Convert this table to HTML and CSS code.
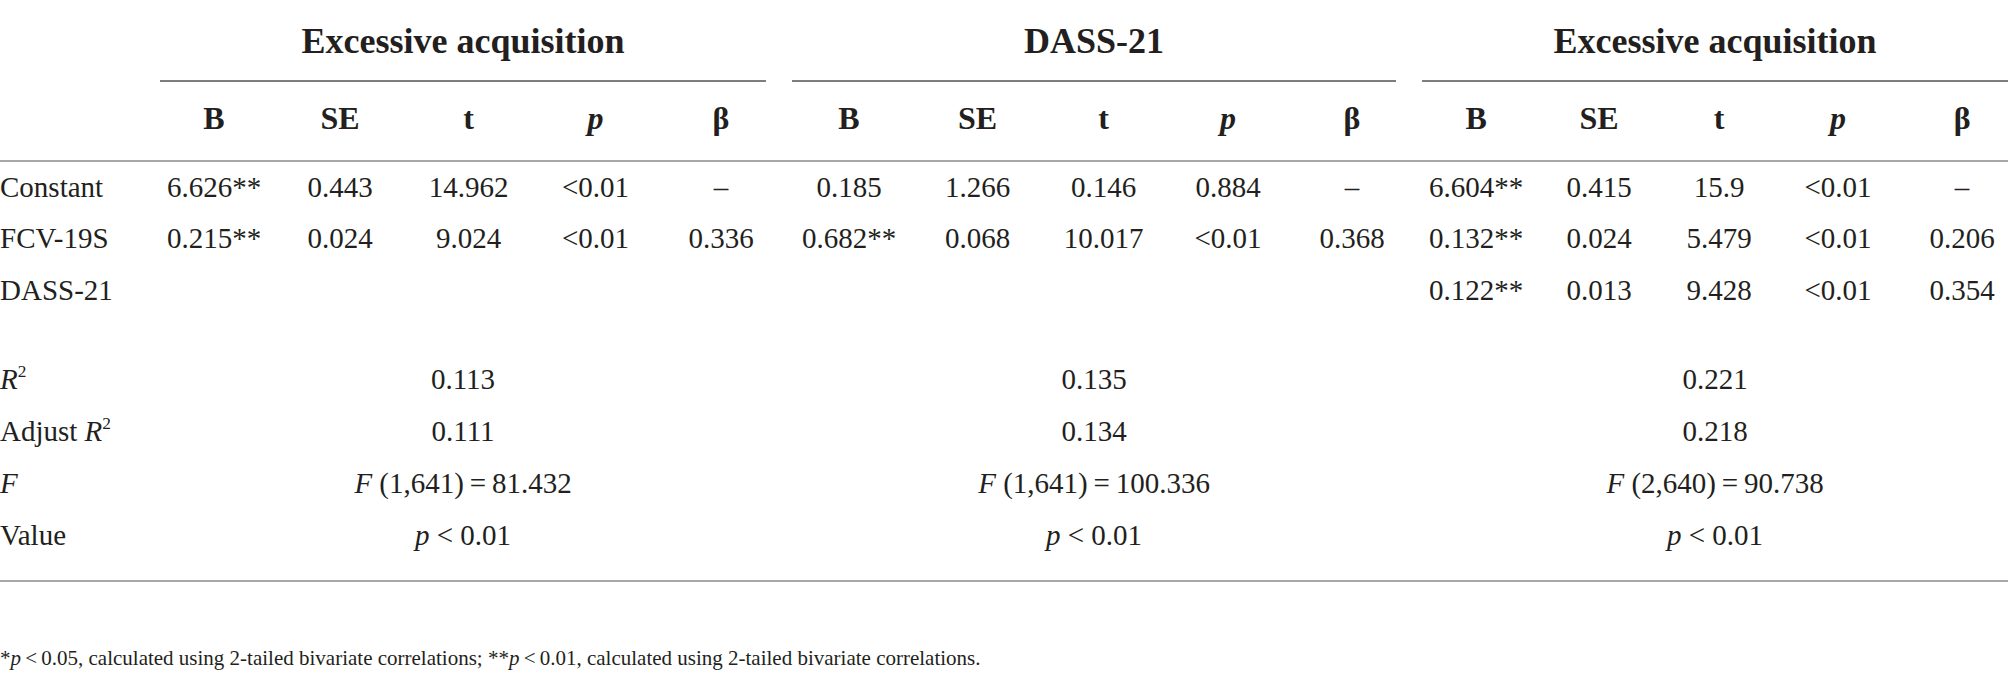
FILE: index.html
```html
<!DOCTYPE html>
<html lang="en">
<head>
    <meta charset="UTF-8">
    <meta name="viewport" content="width=device-width, initial-scale=1.0">
    <title>Regression table</title>
    <link rel="stylesheet" href="styles.css">
</head>
<body>
    <table class="stats">
        <colgroup>
            <col class="c-stub">
            <col style="width: 124px"><col style="width: 128px"><col style="width: 129px"><col style="width: 125px"><col style="width: 126px">
            <col style="width: 130px"><col style="width: 127px"><col style="width: 125px"><col style="width: 124px"><col style="width: 124px">
            <col style="width: 124px"><col style="width: 122px"><col style="width: 118px"><col style="width: 120px"><col style="width: 128px">
        </colgroup>
        <thead>
            <tr class="groups">
                <th></th>
                <th colspan="5"><div class="group-title">Excessive acquisition</div></th>
                <th colspan="5"><div class="group-title">DASS-21</div></th>
                <th colspan="5"><div class="group-title">Excessive acquisition</div></th>
            </tr>
            <tr class="cols">
                <th></th>
                <th>B</th><th>SE</th><th>t</th><th><i>p</i></th><th>β</th>
                <th>B</th><th>SE</th><th>t</th><th><i>p</i></th><th>β</th>
                <th>B</th><th>SE</th><th>t</th><th><i>p</i></th><th>β</th>
            </tr>
        </thead>
        <tbody>
            <tr class="first">
                <td class="stub">Constant</td>
                <td>6.626**</td><td>0.443</td><td>14.962</td><td>&lt;0.01</td><td>–</td>
                <td>0.185</td><td>1.266</td><td>0.146</td><td>0.884</td><td>–</td>
                <td>6.604**</td><td>0.415</td><td>15.9</td><td>&lt;0.01</td><td>–</td>
            </tr>
            <tr>
                <td class="stub">FCV-19S</td>
                <td>0.215**</td><td>0.024</td><td>9.024</td><td>&lt;0.01</td><td>0.336</td>
                <td>0.682**</td><td>0.068</td><td>10.017</td><td>&lt;0.01</td><td>0.368</td>
                <td>0.132**</td><td>0.024</td><td>5.479</td><td>&lt;0.01</td><td>0.206</td>
            </tr>
            <tr>
                <td class="stub">DASS-21</td>
                <td></td><td></td><td></td><td></td><td></td>
                <td></td><td></td><td></td><td></td><td></td>
                <td>0.122**</td><td>0.013</td><td>9.428</td><td>&lt;0.01</td><td>0.354</td>
            </tr>
            <tr class="spacer"><td colspan="16"></td></tr>
            <tr>
                <td class="stub"><i>R</i><sup>2</sup></td>
                <td colspan="5" class="merged">0.113</td>
                <td colspan="5" class="merged">0.135</td>
                <td colspan="5" class="merged">0.221</td>
            </tr>
            <tr>
                <td class="stub">Adjust <i>R</i><sup>2</sup></td>
                <td colspan="5" class="merged">0.111</td>
                <td colspan="5" class="merged">0.134</td>
                <td colspan="5" class="merged">0.218</td>
            </tr>
            <tr>
                <td class="stub"><i>F</i></td>
                <td colspan="5" class="merged"><i>F</i> (1,641)&thinsp;=&thinsp;81.432</td>
                <td colspan="5" class="merged"><i>F</i> (1,641)&thinsp;=&thinsp;100.336</td>
                <td colspan="5" class="merged"><i>F</i> (2,640)&thinsp;=&thinsp;90.738</td>
            </tr>
            <tr class="last">
                <td class="stub">Value</td>
                <td colspan="5" class="merged"><i>p</i> &lt; 0.01</td>
                <td colspan="5" class="merged"><i>p</i> &lt; 0.01</td>
                <td colspan="5" class="merged"><i>p</i> &lt; 0.01</td>
            </tr>
        </tbody>
    </table>

    <p class="footnote">*<i>p</i>&thinsp;&lt;&thinsp;0.05, calculated using 2-tailed bivariate correlations; **<i>p</i>&thinsp;&lt;&thinsp;0.01, calculated using 2-tailed bivariate correlations.</p>
</body>
</html>
```

FILE: styles.css
```css
html {
    overflow: hidden;
}
body {
    margin: 0;
    font-family: "Liberation Serif", "Times New Roman", serif;
    color: #231f20;
    background: #fff;
}
.stats {
    width: 2026px;
    table-layout: fixed;
    border-collapse: collapse;
}
.c-stub {
    width: 152px;
}
.stats th {
    font-weight: bold;
    text-align: center;
    padding: 0;
}
.groups th {
    padding: 21px 18px 0 8px;
    font-size: 36px;
    line-height: 40px;
}
.group-title {
    padding-bottom: 19px;
    border-bottom: 2px solid #7d7d7d;
}
.cols th {
    font-size: 32px;
    line-height: 40px;
    padding: 16px 0 22px;
    border-bottom: 2px solid #a8a8a8;
}
.stats td {
    font-size: 29px;
    line-height: 52px;
    text-align: center;
    padding: 0;
    white-space: nowrap;
}
.stats td.stub {
    text-align: left;
}
.stats td.merged {
    padding: 0 18px 0 8px;
}
.first td {
    line-height: 50px;
}
.spacer td {
    height: 37px;
    line-height: 0;
}
.last td,
.last td.merged {
    padding-bottom: 19px;
    border-bottom: 2px solid #a8a8a8;
}
sup {
    font-size: 60%;
    line-height: 0;
    vertical-align: 0.7em;
}
.footnote {
    margin: 61px 0 0;
    font-size: 21px;
    line-height: 30px;
}
```
